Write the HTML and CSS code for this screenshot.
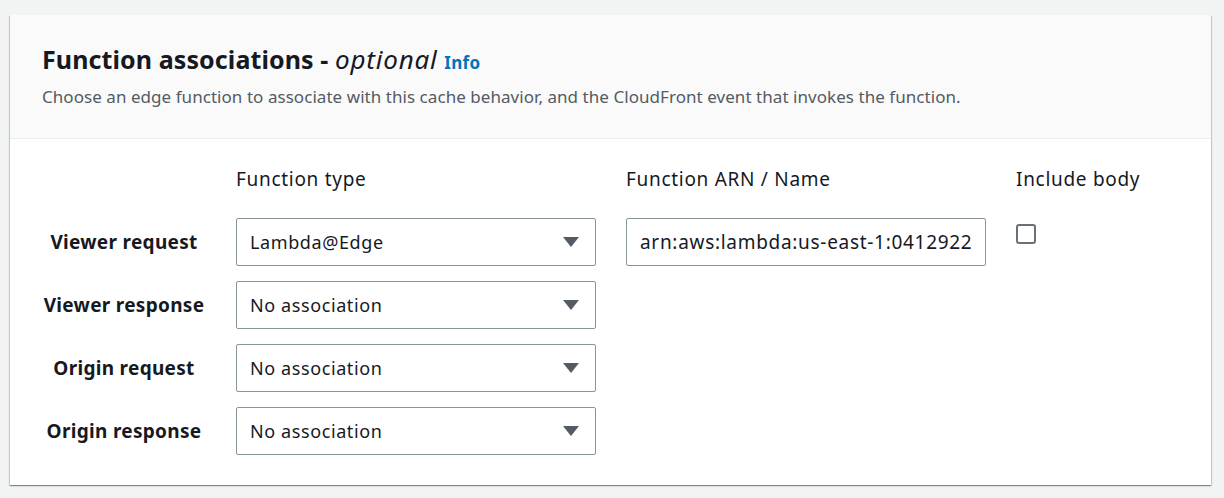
FILE: index.html
```html
<!DOCTYPE html>
<html lang="en">
<head>
<meta charset="utf-8">
<title>Function associations</title>
<link rel="stylesheet" href="styles.css">
</head>
<body>
<div class="page">
  <section class="card">
    <header class="card-header">
      <h2 class="title">Function associations - <em>optional</em> <a class="info" href="#">Info</a></h2>
      <p class="desc">Choose an edge function to associate with this cache behavior, and the CloudFront event that invokes the function.</p>
    </header>
    <div class="card-body">
      <div class="grid">
        <div></div>
        <div class="col-head">Function type</div>
        <div class="col-head">Function ARN / Name</div>
        <div class="col-head">Include body</div>

        <div class="row-label">Viewer request</div>
        <div class="select"><span>Lambda@Edge</span><svg class="caret" width="16" height="10" viewBox="0 0 16 10"><path d="M0 0H16L8 10Z" fill="#545b64"/></svg></div>
        <div class="input"><span>arn:aws:lambda:us-east-1:0412922</span></div>
        <div class="check-cell"><span class="checkbox"></span></div>

        <div class="row-label">Viewer response</div>
        <div class="select"><span>No association</span><svg class="caret" width="16" height="10" viewBox="0 0 16 10"><path d="M0 0H16L8 10Z" fill="#545b64"/></svg></div>
        <div></div><div></div>

        <div class="row-label">Origin request</div>
        <div class="select"><span>No association</span><svg class="caret" width="16" height="10" viewBox="0 0 16 10"><path d="M0 0H16L8 10Z" fill="#545b64"/></svg></div>
        <div></div><div></div>

        <div class="row-label">Origin response</div>
        <div class="select"><span>No association</span><svg class="caret" width="16" height="10" viewBox="0 0 16 10"><path d="M0 0H16L8 10Z" fill="#545b64"/></svg></div>
        <div></div><div></div>
      </div>
    </div>
  </section>
</div>
</body>
</html>
```
FILE: styles.css
```css
* { box-sizing: border-box; }
html, body { margin: 0; padding: 0; }
body {
  background: #f2f3f3;
  font-family: "Noto Sans", "Open Sans", sans-serif;
  color: #16191f;
}
.page {
  padding: 15px 13px 12px 10px;
}
.card {
  background: #fff;
  box-shadow: 0 1px 1px 0 rgba(0,28,36,.3), 1px 1px 1px 0 rgba(0,28,36,.15), -1px 1px 1px 0 rgba(0,28,36,.15);
}
.card-header {
  background: #fafafa;
  border-bottom: 1px solid #eaeded;
  height: 124px;
  padding: 27px 32px 0 32px;
}
.title {
  margin: 0;
  font-size: 25px;
  font-weight: 700;
  line-height: 34px;
  color: #16191f;
  letter-spacing: 0.1px;
}
.title em {
  font-weight: 400;
  font-style: italic;
  font-size: 26px;
  letter-spacing: 0.8px;
}
.info {
  color: #0073bb;
  font-size: 17px;
  font-weight: 700;
  text-decoration: none;
  letter-spacing: 0.3px;
}
.desc {
  margin: 5px 0 0;
  font-size: 17px;
  line-height: 24px;
  color: #545b64;
  letter-spacing: 0.05px;
}
.card-body {
  padding: 27px 32px 30px 32px;
}
.grid {
  display: grid;
  grid-template-columns: 164px 360px 360px auto;
  column-gap: 30px;
  row-gap: 15px;
  align-items: center;
}
.col-head {
  font-size: 19px;
  line-height: 26px;
  margin-bottom: 11px;
  letter-spacing: 0.7px;
}
.row-label {
  font-size: 19px;
  font-weight: 700;
  text-align: center;
  line-height: 26px;
  letter-spacing: 0.3px;
  white-space: nowrap;
}
.select, .input {
  height: 48px;
  border: 1px solid #879596;
  border-radius: 2px;
  display: flex;
  align-items: center;
  padding: 0 14px 0 13px;
  font-size: 18px;
  letter-spacing: 0.6px;
  overflow: hidden;
  white-space: nowrap;
  background: #fff;
}
.select span { flex: 1; }
.caret { flex: none; margin-right: 2px; }
.input { font-size: 19px; letter-spacing: 0.7px; }
.input span { overflow: hidden; display: block; }
.check-cell {
  align-self: start;
  padding-top: 6px;
}
.checkbox {
  display: block;
  width: 20px;
  height: 20px;
  border: 2px solid #687078;
  border-radius: 3px;
  background: #fff;
}
```
